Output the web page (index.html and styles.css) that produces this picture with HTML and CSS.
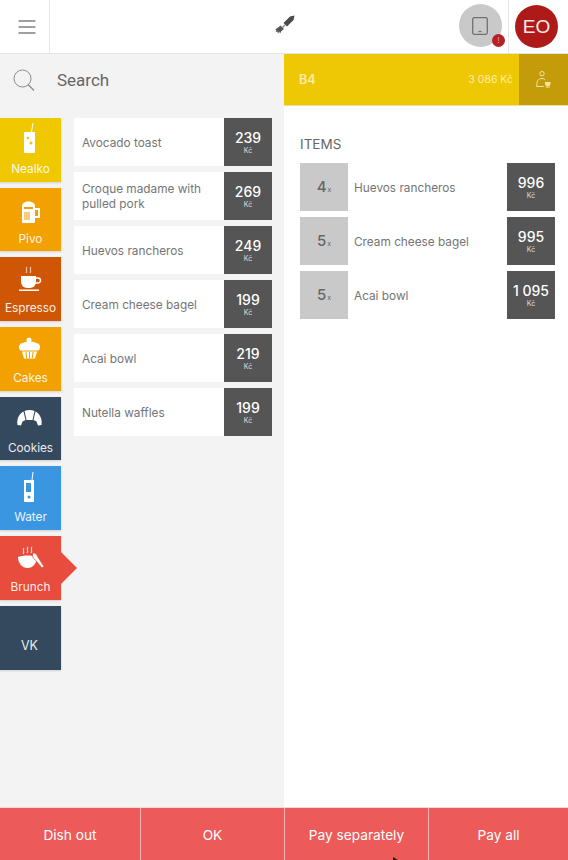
FILE: index.html
```html
<!DOCTYPE html>
<html lang="en">
  <head>
    <meta charset="UTF-8" />
    <title>POS</title>
    <link rel="stylesheet" href="styles.css">
  </head>
  <body>
    <div class="MainContainer">
      <div class="topbar">
        <div class="menu-btn">
          <svg width="18" height="14" viewBox="0 0 18 14"><path d="M0.500 1h17M0.500 7h17M0.500 13h17" stroke="#808080" stroke-width="1.400" fill="none"/></svg>
        </div>
        <div class="logo">
          <svg width="20" height="20" viewBox="0 0 20 20"><path d="M19.500 .5l-1 4.500-6.500 6.500-3.500-3.500 6.500-6.500z" fill="#4a4a4a"/><path d="M9.500 9.500l-2.500 2.500 1 1 2.500-2.500z" fill="#888"/><path d="M5.500 10.500l3.500 3.500-2.500 2-1.500 2.500-.7-2-1.300 2-.6-2-1.700.5.700-2-1.400-.5 2.500-1.500z" fill="#555"/></svg>
        </div>
        <div class="top-actions">
          <div class="tablet-btn">
            <svg width="16" height="18" viewBox="0 0 16 18"><rect x=".7" y=".7" width="14.600" height="16.600" rx="1.500" fill="none" stroke="#707070" stroke-width="1.300"/><path d="M6.500 14.500h3" stroke="#707070" stroke-width="1.200"/></svg>
            <span class="badge">!</span>
          </div>
          <div class="user-btn"><span class="avatar">EO</span></div>
        </div>
      </div>

      <div class="columns">
        <div class="left-col">
          <div class="search">
            <svg width="22" height="23" viewBox="0 0 22 23"><circle cx="9.500" cy="9.500" r="8.500" fill="none" stroke="#8a8a8a" stroke-width="1"/><path d="M15 15.500l6 6" stroke="#8a8a8a" stroke-width="1.200"/></svg>
            <span>Search</span>
          </div>
          <div class="browser">
            <div class="cats">
              <div class="cat yellow">
                <svg class="cat-icon" viewBox="0 0 61 44"><path d="M31.500 14l1.500-9" stroke="#fff" stroke-width="1"/><path d="M24 14h11v20a1 1 0 0 1-1 1h-9a1 1 0 0 1-1-1z" fill="#fff"/><circle cx="28" cy="20" r="1.300" fill="#efc800"/><circle cx="31" cy="25" r="1.500" fill="#efc800"/></svg>
                <span>Nealko</span>
              </div>
              <div class="cat amber">
                <svg class="cat-icon" viewBox="0 0 61 44"><path d="M22 18c0-6 13-6 13 0v16a1 1 0 0 1-1 1H23a1 1 0 0 1-1-1z" fill="#fff"/><path d="M24 19h9v2h-9z" fill="#f2a100"/><path d="M35 21h4v8h-4" fill="none" stroke="#fff" stroke-width="2"/><path d="M24 24h6v8h-6z" fill="#f7cc80"/></svg>
                <span>Pivo</span>
              </div>
              <div class="cat burnt">
                <svg class="cat-icon" viewBox="0 0 61 44"><path d="M27 10c-2 2 1 3-1 6M31 10c-2 2 1 3-1 6" stroke="#eec0a0" fill="none" stroke-width="1.200"/><path d="M21 19h15v6a6 6 0 0 1-6 6h-3a6 6 0 0 1-6-6z" fill="#fff"/><path d="M36 21h2a2 2 0 0 1 0 5h-2.500" stroke="#fff" stroke-width="1.500" fill="none"/><path d="M19 32.500h20v1.500H19z" fill="#fff"/></svg>
                <span>Espresso</span>
              </div>
              <div class="cat amber">
                <svg class="cat-icon" viewBox="0 0 61 44"><circle cx="29" cy="13" r="2.500" fill="#fff"/><path d="M23 16c2-2 11-2 13 0 4 0 5.500 5 2.500 7.500h-18C17.500 21 19 16 23 16z" fill="#fff"/><path d="M22 24.500h15l-2 7H24z" fill="#fff"/><path d="M26 25l.7 6M29.500 25v6M33 25l-.7 6" stroke="#f2a100"/></svg>
                <span>Cakes</span>
              </div>
              <div class="cat navy">
                <svg class="cat-icon" viewBox="0 0 61 44"><path d="M24.500 14c3-1.300 7-1.300 10 0l-2 9h-6z" fill="#fff"/><path d="M23.500 14.500l2 8.500-3 1.500-1.500 4-3.500-.5C16.500 22 19 17 23.500 14.500zM35.500 14.500l-2 8.500 3 1.500 1.500 4 3.500-.5C42.500 22 40 17 35.500 14.500z" fill="#fff"/></svg>
                <span>Cookies</span>
              </div>
              <div class="cat blue">
                <svg class="cat-icon" viewBox="0 0 61 44"><path d="M32 14l1-8" stroke="#fff"/><path d="M24 14h10v21a1 1 0 0 1-1 1h-8a1 1 0 0 1-1-1z" fill="#fff"/><rect x="26" y="17" width="5" height="9" fill="#3a96e0"/><circle cx="29" cy="31" r="1.500" fill="#3a96e0"/></svg>
                <span>Water</span>
              </div>
              <div class="cat red active">
                <svg class="cat-icon" viewBox="0 0 61 44"><path d="M24 12c-2 2 1 3-1 6M28 11c-2 2 1 3-1 6M32 11c-2 2 1 3-1 6" stroke="#f8d6d0" fill="none" stroke-width="1.200"/><path d="M18 21c6-2 13-2 19 0 0 6-4 11-9.500 11S18 27 18 21z" fill="#fff"/><path d="M33 17c2-.5 4 1 4.500 3.500l6.500 10-2 1.500-7.500-9c-2-1-2.500-4-1.500-6z" fill="#fff" stroke="#e74c3c" stroke-width=".8"/></svg>
                <span>Brunch</span>
              </div>
              <div class="cat navy only-text">
                <span>VK</span>
              </div>
            </div>
            <div class="dishes">
              <div class="dish"><div class="dish-name">Avocado toast</div><div class="price"><b>239</b><small>Kč</small></div></div>
              <div class="dish"><div class="dish-name">Croque madame with pulled pork</div><div class="price"><b>269</b><small>Kč</small></div></div>
              <div class="dish"><div class="dish-name">Huevos rancheros</div><div class="price"><b>249</b><small>Kč</small></div></div>
              <div class="dish"><div class="dish-name">Cream cheese bagel</div><div class="price"><b>199</b><small>Kč</small></div></div>
              <div class="dish"><div class="dish-name">Acai bowl</div><div class="price"><b>219</b><small>Kč</small></div></div>
              <div class="dish"><div class="dish-name">Nutella waffles</div><div class="price"><b>199</b><small>Kč</small></div></div>
            </div>
          </div>
        </div>

        <div class="right-col">
          <div class="table-bar">
            <span class="table-name">B4</span>
            <span class="table-total">3 086 Kč</span>
            <div class="guest-btn">
              <svg width="15" height="17" viewBox="0 0 15 17"><circle cx="6" cy="2.700" r="2.200" fill="none" stroke="#f5e6a8"/><path d="M.7 15.500c0-5 1-8 5.300-8 1.500 0 2.500.5 3.200 1.500M.7 15.500h7" fill="none" stroke="#f5e6a8"/><path d="M9 11h5.500v1.500a2.700 2.700 0 0 1-5.500 0z" fill="#f5e6a8"/><path d="M9.500 16h4.500" stroke="#f5e6a8"/></svg>
            </div>
          </div>
          <div class="order">
            <div class="order-title">ITEMS</div>
            <div class="order-row"><div class="qty"><b>4</b><small>x</small></div><div class="order-name">Huevos rancheros</div><div class="price"><b>996</b><small>Kč</small></div></div>
            <div class="order-row"><div class="qty"><b>5</b><small>x</small></div><div class="order-name">Cream cheese bagel</div><div class="price"><b>995</b><small>Kč</small></div></div>
            <div class="order-row"><div class="qty"><b>5</b><small>x</small></div><div class="order-name">Acai bowl</div><div class="price"><b>1 095</b><small>Kč</small></div></div>
          </div>
        </div>
      </div>

      <div class="bottombar">
        <div class="bottom-btn side">Dish out</div>
        <div class="bottom-btn">OK</div>
        <div class="bottom-btn">Pay separately</div>
        <div class="bottom-btn side">Pay all</div>
        <svg class="cursor" width="5" height="3" viewBox="0 0 5 3"><path d="M0 0l5 3H0z" fill="#222"/></svg>
      </div>
    </div>
  </body>
</html>
```

FILE: styles.css
```css
* {
  box-sizing: border-box;
}

body {
  font-family: "Inter", "Liberation Sans", sans-serif;
  margin: 0;
  background-color: #ffffff;
  color: #666;
}

.MainContainer {
  width: 568px;
  height: 860px;
  display: flex;
  flex-direction: column;
  overflow: hidden;
}

.topbar {
  height: 54px;
  flex: none;
  display: flex;
  align-items: center;
  background-color: #fff;
  border-bottom: 1px solid #e4e4e4;
}

.menu-btn {
  width: 50px;
  height: 53px;
  display: flex;
  align-items: center;
  padding-left: 18px;
  border-right: 1px solid #e6e6e6;
}

.logo {
  flex: 1;
  display: flex;
  justify-content: center;
  padding-left: 62px;
  padding-bottom: 3px;
}

.top-actions {
  display: flex;
  height: 53px;
}

.tablet-btn {
  width: 50px;
  display: flex;
  align-items: center;
  position: relative;
}

.tablet-btn::before {
  content: "";
  position: absolute;
  left: 1px;
  top: 4px;
  width: 43px;
  height: 43px;
  border-radius: 50%;
  background-color: #c9c9c9;
}

.tablet-btn svg {
  position: relative;
  margin-left: 14px;
  margin-bottom: 1px;
}

.badge {
  position: absolute;
  left: 34px;
  top: 34px;
  width: 13px;
  height: 13px;
  border-radius: 50%;
  background-color: #b5202b;
  color: #e9a0a5;
  font-size: 8px;
  line-height: 13px;
  text-align: center;
}

.user-btn {
  width: 60px;
  display: flex;
  align-items: center;
  padding-left: 6px;
  border-left: 1px solid #e6e6e6;
}

.avatar {
  width: 43px;
  height: 43px;
  border-radius: 50%;
  background-color: #ae1a17;
  color: #fbeaea;
  font-size: 19px;
  display: flex;
  align-items: center;
  justify-content: center;
  font-family: "Liberation Sans", sans-serif;
}

.columns {
  flex: 1;
  display: flex;
  min-height: 0;
}

.left-col {
  width: 284px;
  flex: none;
  background-color: #f3f3f3;
}

.search {
  height: 52px;
  display: flex;
  align-items: center;
  gap: 22px;
  padding-left: 13px;
  font-family: "Roboto", sans-serif;
  font-size: 17px;
  color: #666;
}

.browser {
  display: flex;
  padding-top: 12px;
  gap: 13px;
}

.cats {
  width: 61px;
  flex: none;
  display: flex;
  flex-direction: column;
  gap: 6px;
}

.cat {
  height: 63.700px;
  display: flex;
  flex-direction: column;
  align-items: center;
  color: #fff;
  font-size: 11.800px;
  line-height: 15px;
  position: relative;
  box-shadow: 0 1px 2px rgba(0, 0, 0, 0.15);
}

.cat-icon {
  display: block;
  width: 61px;
  height: 44px;
  flex: none;
}

.cat span {
  opacity: 0.9;
}

.only-text {
  justify-content: center;
  padding-top: 15px;
  padding-right: 2px;
  font-size: 12.500px;
}

.yellow { background-color: #efc800; }
.amber { background-color: #f2a100; }
.burnt { background-color: #cf5604; }
.navy { background-color: #34495e; }
.blue { background-color: #3a96e0; }
.red { background-color: #e74c3c; }

.active::after {
  content: "";
  position: absolute;
  left: 100%;
  top: 16px;
  border-left: 16px solid #e74c3c;
  border-top: 16px solid transparent;
  border-bottom: 16px solid transparent;
}

.dishes {
  width: 198px;
  display: flex;
  flex-direction: column;
  gap: 6px;
}

.dish {
  height: 48px;
  display: flex;
  background-color: #fff;
}

.dish-name {
  flex: 1;
  display: flex;
  align-items: center;
  padding: 2px 8px 0;
  font-size: 11.800px;
  line-height: 15px;
  color: #757575;
}

.price {
  width: 48px;
  height: 48px;
  flex: none;
  display: flex;
  flex-direction: column;
  align-items: center;
  justify-content: center;
  background-color: #555;
  color: #fff;
}

.price b {
  font-size: 14px;
  font-weight: 500;
  line-height: 17px;
  white-space: nowrap;
}

.price small {
  font-size: 7px;
  line-height: 10px;
  color: #ddd;
}

.right-col {
  flex: 1;
  min-width: 0;
}

.table-bar {
  height: 52px;
  display: flex;
  align-items: center;
  background-color: #eec705;
  color: #fbeea8;
  border-bottom: 1px solid #e9dfa0;
}

.table-name {
  margin-left: 15px;
  font-size: 12.500px;
  font-weight: 600;
}

.table-total {
  margin-left: auto;
  margin-right: 6px;
  font-size: 10.500px;
}

.guest-btn {
  width: 49px;
  height: 51px;
  display: flex;
  align-items: center;
  justify-content: center;
  background-color: #c49c0a;
}

.order {
  padding: 28px 13px 0 16px;
}

.order-title {
  font-size: 13.500px;
  line-height: 20px;
  color: #666;
  margin-bottom: 9px;
}

.order-row {
  display: flex;
  align-items: center;
  margin-bottom: 6px;
}

.qty {
  width: 48px;
  height: 48px;
  flex: none;
  display: flex;
  align-items: baseline;
  justify-content: center;
  padding-top: 14px;
  gap: 1px;
  background-color: #c9c9c9;
  color: #666;
}

.qty b {
  font-size: 15px;
  font-weight: 500;
}

.qty small {
  font-size: 7px;
}

.order-name {
  flex: 1;
  padding: 1px 0 0 6px;
  font-size: 11.800px;
  color: #757575;
}

.bottombar {
  height: 53px;
  flex: none;
  display: flex;
  position: relative;
  background-color: #ec5b59;
  border-top: 1px solid #f3d9d6;
}

.bottom-btn {
  flex: 1;
  display: flex;
  align-items: center;
  justify-content: center;
  padding-top: 2px;
  color: #fff;
  font-size: 13.700px;
  border-left: 1px solid #f3b5b2;
}

.side {
  flex: none;
  width: 140px;
}

.bottom-btn:first-child {
  border-left: none;
}

.cursor {
  position: absolute;
  left: 393px;
  bottom: 0;
}
```
